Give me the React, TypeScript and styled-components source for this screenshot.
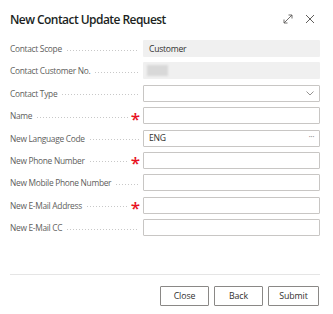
import { createGlobalStyle } from "styled-components";
import styled from "styled-components";

const GlobalStyle = createGlobalStyle`
  html, body {
    margin: 0;
    padding: 0;
    background: #ffffff;
  }
  body {
    font-family: "Open Sans", "Noto Sans", sans-serif;
    color: #323130;
  }
`;

const Dialog = styled.div`
  width: 333px;
  height: 314px;
  box-sizing: border-box;
  padding: 0 13px 0 10px;
  display: flex;
  flex-direction: column;
`;

const Header = styled.div`
  display: flex;
  align-items: center;
  justify-content: space-between;
  height: 36px;
  padding-top: 2px;
  box-sizing: border-box;
`;

const Title = styled.h1`
  margin: 0;
  font-size: 12px;
  font-weight: 600;
  color: #201f1e;
  letter-spacing: -0.55px;
`;

const HeaderIcons = styled.div`
  display: flex;
  align-items: center;
  gap: 12px;
  margin-right: 5px;
`;

const Form = styled.div`
  display: grid;
  grid-template-columns: 133px 1fr;
  grid-auto-rows: 17px;
  row-gap: 5.4px;
  margin-top: 4px;
`;

const LabelCell = styled.div`
  display: flex;
  align-items: center;
  min-width: 0;
  padding-right: 4px;
`;

const LabelText = styled.span`
  font-size: 8.4px;
  letter-spacing: -0.3px;
  color: #605e5c;
  white-space: nowrap;
  padding-right: 4px;
`;

const Leader = styled.span`
  flex: 1;
  height: 3px;
  margin-top: 3px;
  background-image: radial-gradient(circle, #c8c8c8 0.6px, transparent 0.9px);
  background-size: 3px 3px;
  background-repeat: repeat-x;
`;

const Star = styled.span`
  color: #e81123;
  font-size: 17px;
  font-weight: 600;
  line-height: 1;
  margin-left: 2px;
  margin-right: -1px;
  height: 12px;
`;

const Field = styled.div<{ $readOnly?: boolean }>`
  box-sizing: border-box;
  height: 17px;
  display: flex;
  align-items: center;
  justify-content: space-between;
  padding: 0 5px;
  border: 1px solid ${(p) => (p.$readOnly ? "transparent" : "#c8c6c4")};
  background: ${(p) => (p.$readOnly ? "#f0f0f0" : "#ffffff")};
  border-radius: 1px;
  font-size: 8.6px;
  letter-spacing: -0.25px;
  color: #323130;
`;

const Blur = styled.span`
  width: 21px;
  height: 11px;
  background: #d8d8d8;
  filter: blur(1px);
  margin-left: -2px;
`;

const Ellipsis = styled.span`
  color: #8a8886;
  font-size: 9px;
  letter-spacing: -0.5px;
  margin-top: -3px;
`;

const Divider = styled.div`
  height: 1px;
  background: #e5e5e5;
  margin-top: 38px;
`;

const Footer = styled.div`
  display: flex;
  justify-content: flex-end;
  gap: 5px;
  margin-top: 11px;
  margin-right: 1px;
`;

const Button = styled.button<{ $w: number }>`
  width: ${(p) => p.$w}px;
  height: 20px;
  box-sizing: border-box;
  background: #ffffff;
  border: 1px solid #8a8886;
  border-radius: 1px;
  font-family: "Open Sans", sans-serif;
  font-size: 8.8px;
  font-weight: 500;
  letter-spacing: -0.1px;
  color: #323130;
  padding: 0;
`;

type Row = {
  label: string;
  required?: boolean;
  readOnly?: boolean;
  value?: string;
  kind?: "select" | "lookup" | "blur";
};

const rows: Row[] = [
  { label: "Contact Scope", readOnly: true, value: "Customer" },
  { label: "Contact Customer No.", readOnly: true, kind: "blur" },
  { label: "Contact Type", kind: "select" },
  { label: "Name", required: true },
  { label: "New Language Code", value: "ENG", kind: "lookup" },
  { label: "New Phone Number", required: true },
  { label: "New Mobile Phone Number" },
  { label: "New E-Mail Address", required: true },
  { label: "New E-Mail CC" },
];

const ExpandIcon = () => (
  <svg width="10" height="10" viewBox="0 0 10 10" fill="none" stroke="#605e5c" strokeWidth="0.9">
    <path d="M1 9 L9 1 M5.5 1 H9 V4.5 M1 5.5 V9 H4.5" />
  </svg>
);

const CloseIcon = () => (
  <svg width="10" height="10" viewBox="0 0 10 10" fill="none" stroke="#605e5c" strokeWidth="1">
    <path d="M1 1 L9 9 M9 1 L1 9" />
  </svg>
);

const Chevron = () => (
  <svg width="8" height="5" viewBox="0 0 8 5" fill="none" stroke="#8a8886" strokeWidth="0.9">
    <path d="M0.5 0.5 L4 4 L7.5 0.5" />
  </svg>
);

const App = () => {
  return (
    <>
      <GlobalStyle />
      <Dialog>
        <Header>
          <Title>New Contact Update Request</Title>
          <HeaderIcons>
            <ExpandIcon />
            <CloseIcon />
          </HeaderIcons>
        </Header>
        <Form>
          {rows.map((row) => (
            <>
              <LabelCell key={row.label + "-l"}>
                <LabelText>{row.label}</LabelText>
                <Leader />
                {row.required && <Star>*</Star>}
              </LabelCell>
              <Field key={row.label + "-f"} $readOnly={row.readOnly}>
                {row.kind === "blur" ? <Blur /> : <span>{row.value}</span>}
                {row.kind === "select" && <Chevron />}
                {row.kind === "lookup" && <Ellipsis>···</Ellipsis>}
              </Field>
            </>
          ))}
        </Form>
        <Divider />
        <Footer>
          <Button $w={49}>Close</Button>
          <Button $w={49}>Back</Button>
          <Button $w={51}>Submit</Button>
        </Footer>
      </Dialog>
    </>
  );
};

export default App;
